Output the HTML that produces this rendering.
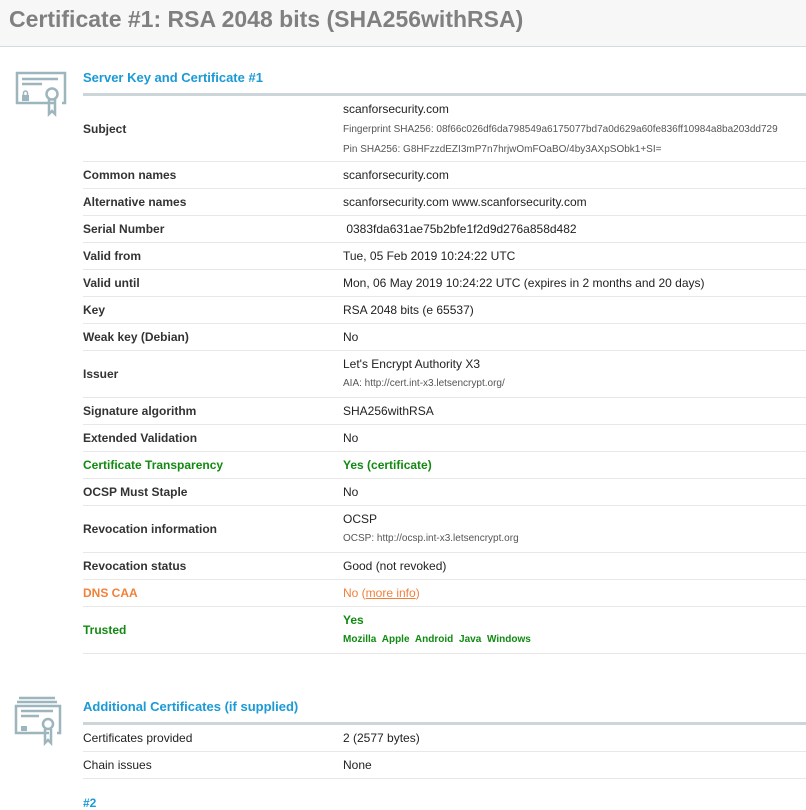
<!DOCTYPE html><html><head><style>
body{margin:0;width:806px;height:807px;overflow:hidden;background:#fff;font-family:"Liberation Sans",Arial,sans-serif;font-size:12px;color:#222;position:relative}
.hdr{height:46px;background:#f7f7f7;border-bottom:1px solid #d5dcdf}
.hdr h1{margin:0;padding:2px 0 0 9px;font-size:23px;color:#808080;font-weight:bold;line-height:34px}
.sec{position:absolute;left:83px;right:0}
.h2{color:#1a9ad6;font-size:13px;font-weight:bold;height:20px}
.rule{height:3px;background:#ccd6da}
.row{display:flex;align-items:center;box-sizing:border-box;border-bottom:1px solid #e8e8e8;height:27px}
.l{width:260px;font-weight:bold;color:#333}
.v{flex:1;color:#222}
.s{font-size:10px;color:#555;line-height:20px}
.g{color:#118a11}
.o{color:#f0813b}
svg{position:absolute}
</style></head><body>
<div class="hdr"><h1>Certificate #1: RSA 2048 bits (SHA256withRSA)</h1></div>
<svg style="left:14px;top:70px" width="54" height="48" viewBox="0 0 54 48"><g fill="none" stroke="#9db5bc" stroke-width="2.5"><path d="M40 33H3V3h48v30h-3"/><path d="M8 9h36M8 14h20"/><circle cx="38" cy="24" r="5.5"/><path d="M35 29v15l3-3 3 3V29"/></g><rect x="8" y="25" width="7" height="6" fill="#9db5bc"/><path d="M9.5 25v-2a2 2 0 0 1 4 0v2" fill="none" stroke="#9db5bc" stroke-width="1.5"/></svg>
<div class="sec" style="top:70px"><div class="h2">Server Key and Certificate #1</div></div>
<div class="sec" style="top:93px"><div class="rule"></div>
<div class="row" style="height:66px"><div class="l">Subject</div><div class="v"><div style="line-height:22px">scanforsecurity.com</div><div class="s">Fingerprint SHA256: 08f66c026df6da798549a6175077bd7a0d629a60fe836ff10984a8ba203dd729</div><div class="s">Pin SHA256: G8HFzzdEZI3mP7n7hrjwOmFOaBO/4by3AXpSObk1+SI=</div></div></div>
<div class="row"><div class="l">Common names</div><div class="v">scanforsecurity.com</div></div>
<div class="row"><div class="l">Alternative names</div><div class="v">scanforsecurity.com www.scanforsecurity.com</div></div>
<div class="row"><div class="l">Serial Number</div><div class="v">&nbsp;0383fda631ae75b2bfe1f2d9d276a858d482</div></div>
<div class="row"><div class="l">Valid from</div><div class="v">Tue, 05 Feb 2019 10:24:22 UTC</div></div>
<div class="row"><div class="l">Valid until</div><div class="v">Mon, 06 May 2019 10:24:22 UTC (expires in 2 months and 20 days)</div></div>
<div class="row"><div class="l">Key</div><div class="v">RSA 2048 bits (e 65537)</div></div>
<div class="row"><div class="l">Weak key (Debian)</div><div class="v">No</div></div>
<div class="row" style="height:47px"><div class="l">Issuer</div><div class="v"><div style="line-height:20px">Let's Encrypt Authority X3</div><div class="s">AIA: http://cert.int-x3.letsencrypt.org/</div></div></div>
<div class="row"><div class="l">Signature algorithm</div><div class="v">SHA256withRSA</div></div>
<div class="row"><div class="l">Extended Validation</div><div class="v">No</div></div>
<div class="row"><div class="l g">Certificate Transparency</div><div class="v g" style="font-weight:bold">Yes (certificate)</div></div>
<div class="row"><div class="l">OCSP Must Staple</div><div class="v">No</div></div>
<div class="row" style="height:47px"><div class="l">Revocation information</div><div class="v"><div style="line-height:20px">OCSP</div><div class="s">OCSP: http://ocsp.int-x3.letsencrypt.org</div></div></div>
<div class="row"><div class="l">Revocation status</div><div class="v">Good (not revoked)</div></div>
<div class="row"><div class="l o">DNS CAA</div><div class="v o">No (<u>more info</u>)</div></div>
<div class="row" style="height:47px"><div class="l g">Trusted</div><div class="v g"><div style="font-weight:bold;line-height:20px">Yes</div><div style="font-size:10px;font-weight:bold;line-height:20px;word-spacing:3px">Mozilla Apple Android Java Windows</div></div></div>
</div>
<svg style="left:14px;top:696px" width="50" height="52" viewBox="0 0 50 52"><g fill="none" stroke="#9db5bc" stroke-width="2.5"><path d="M5 2h36M3 6h40"/><path d="M35 37H2V10h44v27h-3"/><path d="M7 15h32M7 20h18"/><circle cx="34" cy="28" r="5"/><path d="M31 33v14l3-3 3 3V33"/></g><rect x="7" y="30" width="6" height="5" fill="#9db5bc"/></svg>
<div class="sec" style="top:699px"><div class="h2">Additional Certificates (if supplied)</div></div>
<div class="sec" style="top:722px"><div class="rule"></div>
<div class="row"><div class="l" style="font-weight:normal;color:#222">Certificates provided</div><div class="v">2 (2577 bytes)</div></div>
<div class="row"><div class="l" style="font-weight:normal;color:#222">Chain issues</div><div class="v">None</div></div>
<div style="color:#1a9ad6;font-weight:bold;margin-top:17px">#2</div>
</div>
</body></html>
